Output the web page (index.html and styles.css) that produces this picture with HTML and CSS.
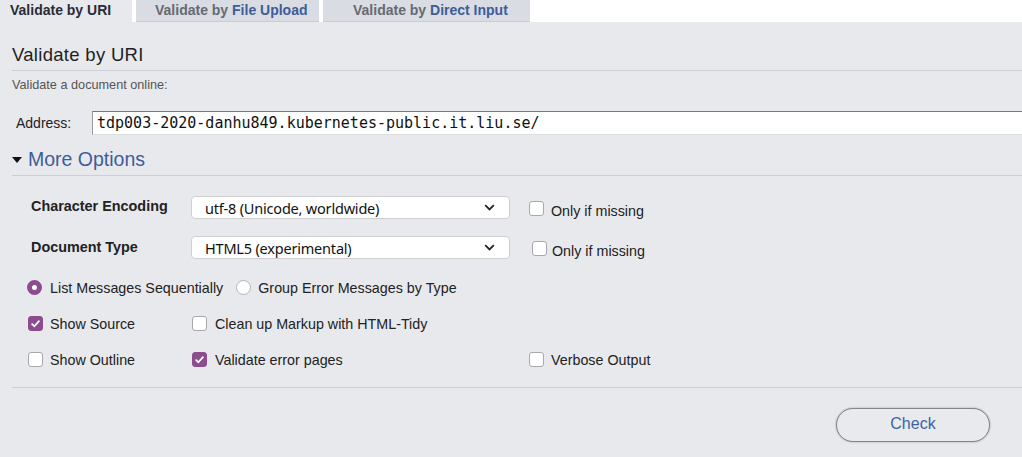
FILE: index.html
```html
<!DOCTYPE html>
<html lang="en">
<head>
<meta charset="utf-8">
<title>Validate by URI</title>
<link rel="stylesheet" href="styles.css">
</head>
<body>
<nav class="tabs">
  <a class="tab tab-uri">Validate by URI</a>
  <a class="tab tab-file">Validate by <span class="hl">File Upload</span></a>
  <a class="tab tab-direct">Validate by <span class="hl">Direct Input</span></a>
</nav>
<form class="panel">
  <h2 class="title">Validate by URI</h2>
  <p class="intro">Validate a document online:</p>
  <div class="address">
    <label class="addr-label">Address:</label>
    <input class="addr-input" type="text" value="tdp003-2020-danhu849.kubernetes-public.it.liu.se/">
  </div>
  <div class="more"><span class="tri"></span>More Options</div>
  <div class="options">
    <div class="sel-row">
      <span class="opt-label">Character Encoding</span>
      <div class="select"><span class="sel-text">utf-8 (Unicode, worldwide)</span><svg class="chev" width="11" height="7" viewBox="0 0 11 7"><path d="M1.2 1.2 L5.5 5.4 L9.8 1.2" fill="none" stroke="#222" stroke-width="1.8"/></svg></div>
      <span class="box missing1"></span><span class="lbl gap7">Only if missing</span>
    </div>
    <div class="sel-row row2">
      <span class="opt-label">Document Type</span>
      <div class="select"><span class="sel-text">HTML5 (experimental)</span><svg class="chev" width="11" height="7" viewBox="0 0 11 7"><path d="M1.2 1.2 L5.5 5.4 L9.8 1.2" fill="none" stroke="#222" stroke-width="1.8"/></svg></div>
      <span class="box missing2"></span><span class="lbl gap5">Only if missing</span>
    </div>
    <div class="radio-row">
      <span class="radio on"></span><span class="lbl gap8">List Messages Sequentially</span>
      <span class="radio second"></span><span class="lbl gap7">Group Error Messages by Type</span>
    </div>
    <div class="check-grid">
      <div class="cell c1"><span class="box on"><svg width="15" height="15" viewBox="0 0 15 15"><path d="M3.6 7.6 L6.3 10.2 L11.4 4.6" fill="none" stroke="#fff" stroke-width="1.7"/></svg></span><span class="lbl gap7">Show Source</span></div>
      <div class="cell c2"><span class="box"></span><span class="lbl gap8">Clean up Markup with HTML-Tidy</span></div>
      <div class="cell c3"></div>
      <div class="cell c1"><span class="box"></span><span class="lbl gap7">Show Outline</span></div>
      <div class="cell c2"><span class="box on"><svg width="15" height="15" viewBox="0 0 15 15"><path d="M3.6 7.6 L6.3 10.2 L11.4 4.6" fill="none" stroke="#fff" stroke-width="1.7"/></svg></span><span class="lbl gap8">Validate error pages</span></div>
      <div class="cell c3"><span class="box"></span><span class="lbl gap7">Verbose Output</span></div>
    </div>
  </div>
  <div class="actions">
    <button class="check-btn" type="button">Check</button>
  </div>
</form>
</body>
</html>
```
FILE: styles.css
```css
html, body {
  margin: 0;
  padding: 0;
  background: #ffffff;
  font-family: "Liberation Sans", Arial, sans-serif;
  color: #222;
}

.tabs {
  display: flex;
  height: 22px;
  gap: 4px;
}
.tab {
  display: block;
  box-sizing: border-box;
  height: 22px;
  font-size: 14px;
  font-weight: bold;
  line-height: 21px;
  color: #666a72;
  background: #d9dce3;
  border-bottom: 1px solid #c8ccd4;
  white-space: nowrap;
}
.tab .hl { color: #3d5d99; }
.tab-uri {
  width: 132px;
  padding-left: 10px;
  background: #e8e9ed;
  border-bottom: none;
  color: #2a2c36;
}
.tab-file { width: 183px; padding-left: 19px; }
.tab-direct { width: 207px; padding-left: 30px; }

.panel {
  margin: 0;
  background: #e8e9ed;
  padding: 0 0 30px 12px;
  overflow: hidden;
  min-height: 435px;
  box-sizing: border-box;
}

.title {
  margin: 21px 0 0;
  font-size: 18.5px;
  font-weight: normal;
  letter-spacing: 0.3px;
  line-height: 24px;
  color: #1f1f24;
  padding-bottom: 3px;
  border-bottom: 1px solid #cdcfd4;
}

.intro {
  margin: 7px 0 0;
  font-size: 12.7px;
  line-height: 14px;
  color: #555;
}

.address {
  display: flex;
  align-items: center;
  margin-top: 19px;
  height: 24px;
}
.addr-label {
  font-size: 14px;
  color: #222;
  padding-left: 4px;
  width: 76px;
}
.addr-input {
  flex: 1;
  height: 24px;
  box-sizing: border-box;
  margin-right: -20px;
  padding: 0 0 0 4px;
  border: none;
  border-top: 1px solid #777;
  border-left: 1px solid #999;
  border-bottom: 1px solid #dcdcdc;
  background: #fff;
  font-family: "DejaVu Sans Mono", "Liberation Mono", monospace;
  font-size: 15px;
  color: #111;
  outline: none;
}

.more {
  display: flex;
  align-items: center;
  margin-top: 13px;
  font-size: 19.5px;
  line-height: 22px;
  color: #3d5d9b;
  padding-bottom: 5px;
  border-bottom: 1px solid #cdcfd4;
}
.tri {
  width: 0;
  height: 0;
  border-left: 5px solid transparent;
  border-right: 5px solid transparent;
  border-top: 6px solid #111;
  margin-right: 6px;
  margin-top: 1px;
}

.options {
  padding-bottom: 18px;
  border-bottom: 1px solid #cdcfd4;
  font-size: 14.3px;
}

.sel-row {
  display: flex;
  align-items: center;
  margin-top: 20px;
  height: 23px;
  padding-left: 19px;
}
.sel-row.row2 { margin-top: 17px; }
.opt-label {
  width: 160px;
  font-weight: bold;
  color: #222;
  font-size: 14.4px;
  margin-top: -3px;
}
.row2 .opt-label { margin-top: -1px; }
.select {
  width: 319px;
  height: 23px;
  box-sizing: border-box;
  border: 1px solid #cfcfd2;
  border-radius: 4px;
  background: #fff;
  display: flex;
  align-items: center;
  justify-content: space-between;
  padding: 0 14px 0 13px;
}
.sel-text {
  font-family: "Noto Sans", "Open Sans", sans-serif;
  font-size: 14.5px;
  color: #111;
  letter-spacing: -0.2px;
}
.chev { display: block; }

.box {
  width: 15px;
  height: 15px;
  box-sizing: border-box;
  border: 1px solid #a8a8ab;
  border-radius: 3px;
  background: #fff;
  flex: none;
  display: inline-block;
}
.box.on {
  background: #8b4d8d;
  border-color: #8b4d8d;
  position: relative;
}
.box.on svg {
  position: absolute;
  left: -1px;
  top: -1px;
}
.missing1 { margin-left: 19px; margin-top: 2px; }
.missing2 { margin-left: 22px; margin-top: 2px; }

.lbl {
  font-size: 14.3px;
  color: #222;
  white-space: nowrap;
}
.sel-row .lbl { margin-top: 7px; }
.gap5 { margin-left: 5px; }
.gap7 { margin-left: 7px; }
.gap8 { margin-left: 8px; }

.radio-row {
  display: flex;
  align-items: center;
  margin-top: 18px;
  height: 20px;
  padding-left: 15px;
}
.radio {
  width: 15px;
  height: 15px;
  box-sizing: border-box;
  border-radius: 50%;
  border: 1px solid #b5b5b8;
  background: #fff;
  flex: none;
}
.radio.on {
  border: 5px solid #8b4d8d;
  background: #fff;
}
.radio.second { margin-left: 13px; }
.radio-row .lbl { margin-top: 2px; }

.check-grid {
  display: grid;
  grid-template-columns: 164px 337px auto;
  grid-auto-rows: 20px;
  row-gap: 16px;
  margin-top: 16px;
  padding-left: 16px;
}
.cell {
  display: flex;
  align-items: center;
}
.cell .lbl { margin-top: 2px; }

.actions {
  display: flex;
  justify-content: flex-end;
  padding-right: 32px;
  margin-top: 20px;
}
.check-btn {
  width: 154px;
  height: 34px;
  border: 1px solid #858585;
  border-radius: 17px;
  background: #e9eaee;
  box-shadow: 0 0 2px rgba(0, 0, 0, 0.35);
  font-family: "Liberation Sans", Arial, sans-serif;
  font-size: 16px;
  color: #3b63a6;
  padding: 0 0 2px;
}
```
